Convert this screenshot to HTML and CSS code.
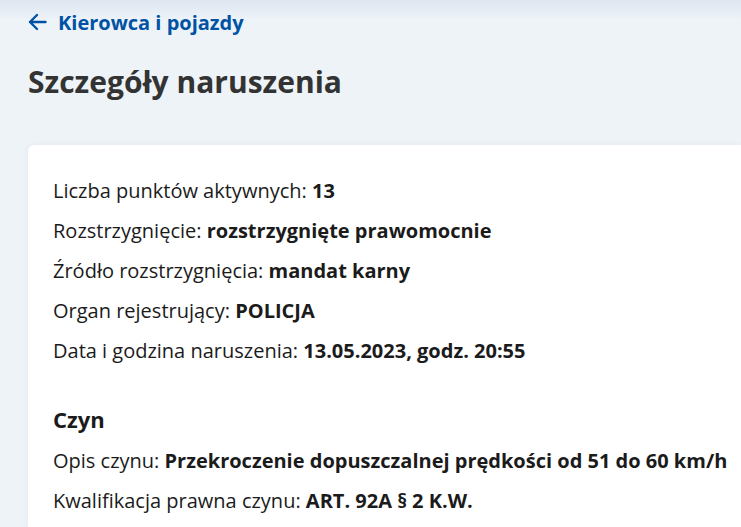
FILE: index.html
```html
<!DOCTYPE html>
<html lang="pl">
<head>
    <meta charset="UTF-8">
    <title>Szczegóły naruszenia</title>
    <link rel="stylesheet" href="styles.css">
</head>
<body>
    <div class="page">
        <a class="back-link" href="#">
            <svg width="19" height="20" viewBox="0 0 19 20" fill="none" stroke="currentColor" stroke-width="2.4" stroke-linecap="round" stroke-linejoin="round"><path d="M17.5 10H2M9 3l-7 7 7 7"/></svg>
            <span>Kierowca i pojazdy</span>
        </a>
        <h1>Szczegóły naruszenia</h1>

        <div class="card">
            <p>Liczba punktów aktywnych: <b>13</b></p>
            <p>Rozstrzygnięcie: <b>rozstrzygnięte prawomocnie</b></p>
            <p>Źródło rozstrzygnięcia: <b>mandat karny</b></p>
            <p>Organ rejestrujący: <b>POLICJA</b></p>
            <p>Data i godzina naruszenia: <b>13.05.2023, godz. 20:55</b></p>

            <h2>Czyn</h2>
            <p>Opis czynu: <b>Przekroczenie dopuszczalnej prędkości od 51 do 60 km/h</b></p>
            <p>Kwalifikacja prawna czynu: <b>ART. 92A § 2 K.W.</b></p>
        </div>
    </div>
</body>
</html>
```

FILE: styles.css
```css
body { margin: 0; font-family: "Open Sans", sans-serif; color: #1b1b1b; background: #eef3f8; }
.page { padding: 8px 0 0 28px; background: linear-gradient(#dfe6f1, #eef3f8 20px); }
.back-link { display: flex; align-items: center; gap: 11px; color: #0052a5; font-weight: 700; font-size: 20px; text-decoration: none; height: 28px; }
h1 { margin: 26px 0 0; font-size: 30px; font-weight: 700; color: #333; line-height: 40px; }
.card { margin-top: 43px; background: #fff; border-radius: 6px 0 0 0; padding: 26px 0 6px 25px; box-shadow: 0 0 6px rgba(30, 60, 110, 0.06); }
.card p { margin: 0; font-size: 20px; line-height: 40px; }
.card b { font-weight: 700; }
h2 { margin: 28px 0 2px; font-size: 22px; font-weight: 700; line-height: 40px; }
```
